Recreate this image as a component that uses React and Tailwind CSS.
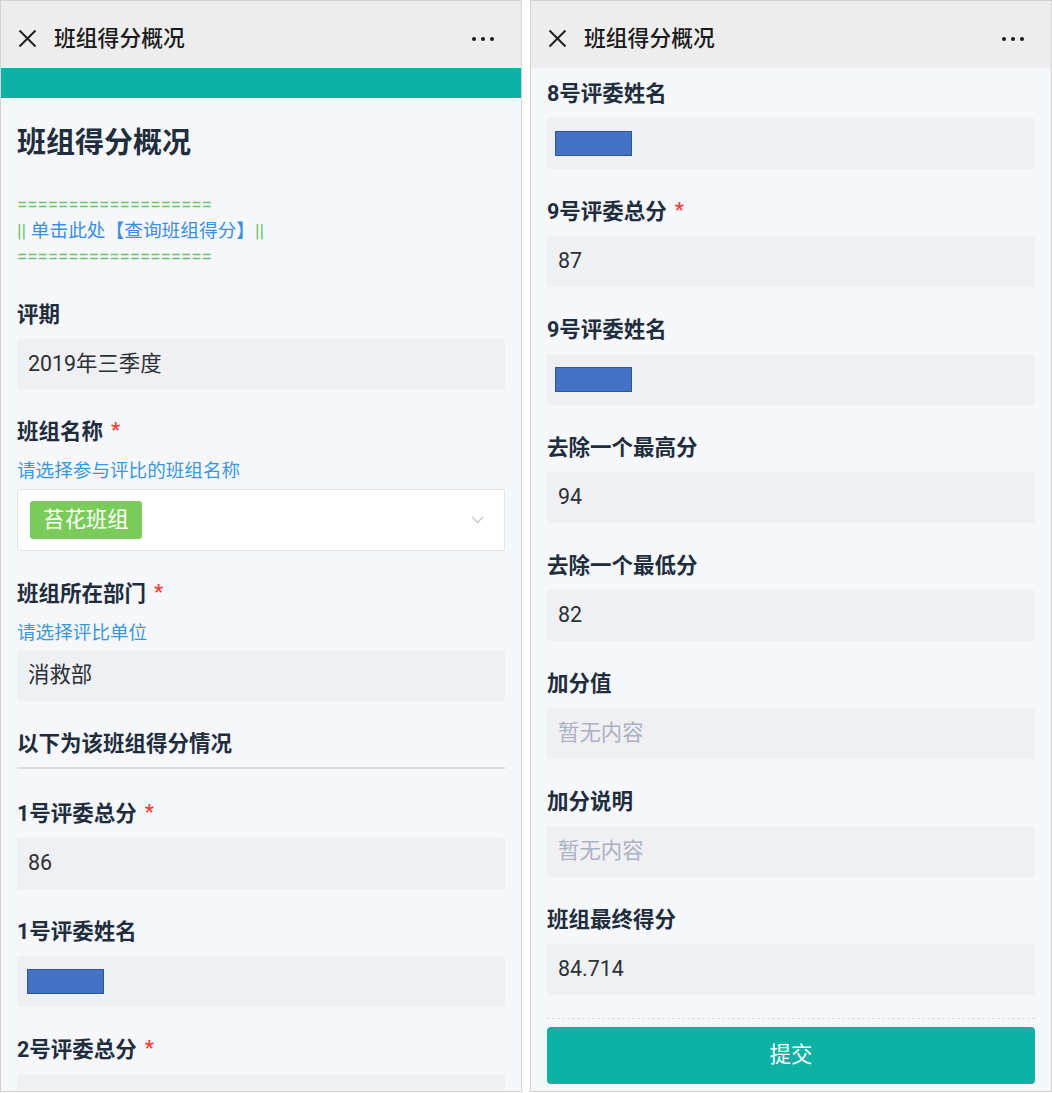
import React from "react"

const FONT = { fontFamily: 'Roboto, "Noto Sans CJK SC", sans-serif' }

function Header() {
  return (
    <div className="h-[67px] pt-[8px] bg-[#ededed] flex items-center pl-[17px] pr-[27px]">
      <svg width="19" height="19" viewBox="0 0 19 19">
        <line x1="1.5" y1="1.5" x2="17.5" y2="17.5" stroke="#1f1f1f" strokeWidth="2" />
        <line x1="17.5" y1="1.5" x2="1.5" y2="17.5" stroke="#1f1f1f" strokeWidth="2" />
      </svg>
      <div className="ml-[17px] text-[21.8px] font-medium text-[#1a1a1a] leading-none">班组得分概况</div>
      <div className="ml-auto flex gap-[5px]">
        <span className="w-[4px] h-[4px] rounded-full bg-[#1a1a1a]" />
        <span className="w-[4px] h-[4px] rounded-full bg-[#1a1a1a]" />
        <span className="w-[4px] h-[4px] rounded-full bg-[#1a1a1a]" />
      </div>
    </div>
  )
}

function Label({ text, required }) {
  return (
    <div className="h-[28px] leading-[28px] text-[21.5px] font-bold text-[#1f2d3d] flex items-center">
      {text}
      {required && <span className="ml-[8px] text-[20px] text-[#f0413a] relative top-[-2px]">*</span>}
    </div>
  )
}

function Hint({ text }) {
  return <div className="mt-[13px] leading-[24px] text-[18.6px] text-[#3b97dc]">{text}</div>
}

function Box({ children, placeholder, className = "mt-[10px]" }) {
  return (
    <div className={`${className} h-[51px] rounded-[3px] bg-[#eff0f4] flex items-center pl-[11px] text-[21.4px] ${placeholder ? "text-[#a9b2c1]" : "text-[#2b2f36]"}`}>
      {children}
    </div>
  )
}

function Redacted({ left }) {
  return (
    <div className="h-[51px] mt-[10px] rounded-[3px] bg-[#eff0f4] relative">
      <div
        className="absolute top-[13px] w-[77px] h-[25px] bg-[#4472c4] border border-[#2f5597]"
        style={{ left }}
      />
    </div>
  )
}

function Field({ label, required, value, placeholder, mt = "mt-[29px]" }) {
  return (
    <div className={mt}>
      <Label text={label} required={required} />
      <Box placeholder={placeholder}>{value}</Box>
    </div>
  )
}

function LeftPanel() {
  return (
    <div className="w-[522px] h-[1092px] border border-[#d3d3d3] bg-[#f5f7fb] overflow-hidden">
      <Header />
      <div className="h-[30px] bg-[#0db2a5]" />
      <div className="px-[16px]">
        <div className="mt-[25px] leading-[40px] text-[29px] font-bold text-[#1f2d3d]">班组得分概况</div>

        <div className="mt-[29px] text-[18.7px] leading-[26px]">
          <div className="text-[#6cc36c]">===================</div>
          <div>
            <span className="text-[#6cc36c]">|| </span>
            <span className="text-[#3b8fe0]">单击此处【查询班组得分】</span>
            <span className="text-[#6cc36c]">||</span>
          </div>
          <div className="text-[#6cc36c]">===================</div>
        </div>

        <Field label="评期" value="2019年三季度" mt="mt-[31px]" />

        <div className="mt-[28px]">
          <Label text="班组名称" required />
          <Hint text="请选择参与评比的班组名称" />
          <div className="mt-[6px] h-[62px] bg-white border border-[#e2e5ea] rounded-[2px] flex items-center pl-[12px] pr-[20px]">
            <span className="h-[38px] px-[13px] rounded-[3px] bg-[#7bcb5b] text-white text-[21.4px] flex items-center">苔花班组</span>
            <svg className="ml-auto" width="13" height="8" viewBox="0 0 13 8">
              <polyline points="1,1 6.5,6.5 12,1" fill="none" stroke="#c3c7ce" strokeWidth="1.4" />
            </svg>
          </div>
        </div>

        <div className="mt-[29px]">
          <Label text="班组所在部门" required />
          <Hint text="请选择评比单位" />
          <Box className="mt-[5px]">消救部</Box>
        </div>

        <div className="mt-[29px] pb-[9px] border-b-2 border-[#d7dce4]">
          <Label text="以下为该班组得分情况" />
        </div>

        <Field label="1号评委总分" required value="86" mt="mt-[31px]" />

        <div className="mt-[29px]">
          <Label text="1号评委姓名" />
          <Redacted left={10} />
        </div>

        <Field label="2号评委总分" required value="" />
      </div>
    </div>
  )
}

function RightPanel() {
  return (
    <div className="w-[522px] h-[1092px] border border-[#d3d3d3] bg-[#f5f7fb] overflow-hidden">
      <Header />
      <div className="px-[16px]">
        <div className="mt-[12px]">
          <Label text="8号评委姓名" />
          <Redacted left={8} />
        </div>
        <Field label="9号评委总分" required value="87" />
        <div className="mt-[29px]">
          <Label text="9号评委姓名" />
          <Redacted left={8} />
        </div>
        <Field label="去除一个最高分" value="94" />
        <Field label="去除一个最低分" value="82" />
        <Field label="加分值" value="暂无内容" placeholder />
        <Field label="加分说明" value="暂无内容" placeholder />
        <Field label="班组最终得分" value="84.714" />

        <div className="mt-[23px] border-t border-dashed border-[#d9dde3]" />
        <button className="mt-[8px] w-full h-[57px] rounded-[4px] bg-[#0db2a5] text-white text-[21.4px] flex items-center justify-center">
          提交
        </button>
      </div>
    </div>
  )
}

export default function App() {
  return (
    <div className="w-[1052px] h-[1093px] bg-white flex gap-[8px]" style={FONT}>
      <LeftPanel />
      <RightPanel />
    </div>
  )
}
